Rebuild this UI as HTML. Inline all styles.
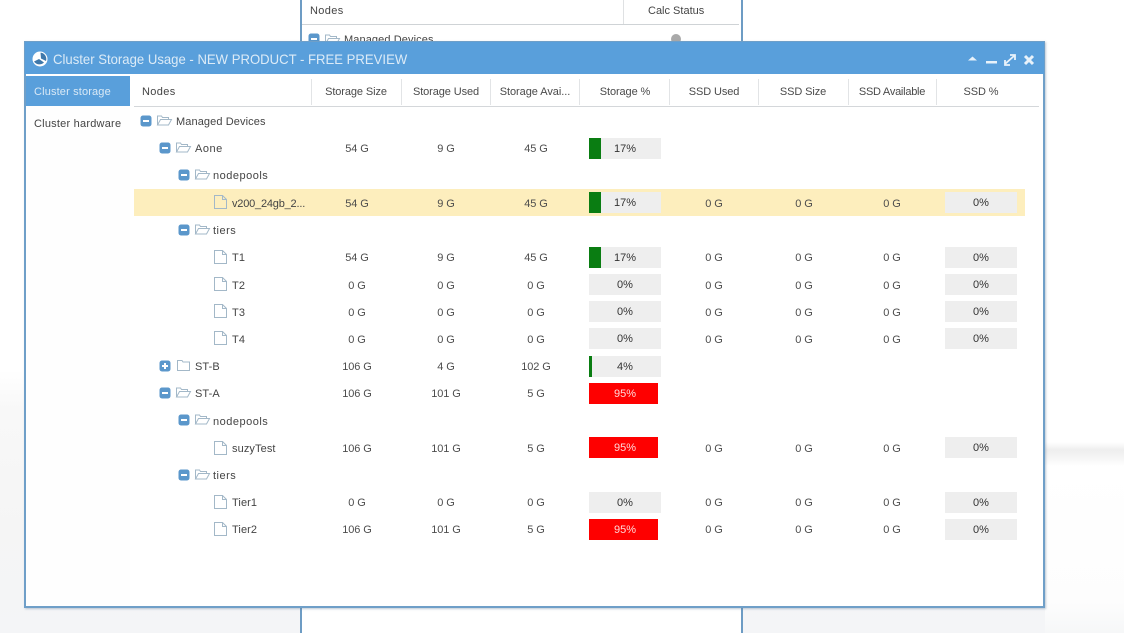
<!DOCTYPE html>
<html><head><meta charset="utf-8"><style>
html,body{margin:0;padding:0;width:1124px;height:633px;overflow:hidden;background:#fff;font-family:"Liberation Sans",sans-serif;color:#444;font-size:11px}
#w{position:relative;width:1124px;height:633px;overflow:hidden}
div,span,svg{position:absolute;display:block}
svg,symbol{overflow:visible}
.bg1{left:0;top:370px;width:1124px;height:263px;background:linear-gradient(180deg,#fff 0,#f8f8f8 15%,#f5f5f5 60%,#f4f5f7 100%)}
.bg2{left:1045px;top:362px;width:79px;height:271px;background:linear-gradient(180deg,#fff 0,#fff 80px,#eeeeee 88px,#f3f3f3 94px,#fff 104px,#fdfdfd 240px,#f6f7f8 271px)}
.back{left:300px;top:-2px;width:439px;height:635px;background:#fff;border-left:2px solid #6d9cc4;border-right:2px solid #6d9cc4}
.win{left:24px;top:41px;width:1017px;height:563px;background:#fff;border:2px solid #6f9fc8;box-shadow:1px 1px 2px rgba(90,120,150,.4)}
.tb{left:25px;top:42px;width:1019px;height:32px;background:#599fdb}
.t{white-space:nowrap;line-height:16px;letter-spacing:.1px;margin-top:1px}
.n{letter-spacing:.5px}
.hd{top:84px;margin-top:0;text-align:center;white-space:nowrap;line-height:16px;letter-spacing:-.1px;color:#4a4a4a}
.sep{top:79px;width:1px;height:26px;background:#e2e4e6}
.c{width:90px;text-align:center;white-space:nowrap;line-height:16px;letter-spacing:-.1px;color:#4d4d4d;margin-top:1px}
.bar{width:72px;height:21px;background:#eee}
.g{left:0;top:0;height:21px;background:#0a7d12}
.r{left:0;top:0;width:69px;height:21px;background:#fe0000}
.p{left:0;top:3px;width:72px;text-align:center;line-height:16px;font-size:11px;color:#333}
.w{color:#ffd8d8}
</style></head><body>
<div id="w">
<svg width="0" height="0" style="left:0;top:0"><defs>
<symbol id="m" viewBox="0 0 10 10"><rect x="-.5" y="-.5" width="11" height="11" rx="2.5" fill="#5b97cb"/><rect x="2" y="4" width="6" height="2" fill="#fff"/></symbol>
<symbol id="a" viewBox="0 0 10 10"><rect x="-.5" y="-.5" width="11" height="11" rx="2.5" fill="#5b97cb"/><path d="M2 4h2V2h2v2h2v2H6v2H4V6H2z" fill="#fff"/></symbol>
<symbol id="o" viewBox="0 0 15 11"><path d="M.5 10V1h4l1 1.500h6V4.500M.5 10l3-5.500H14.500L11.500 10z" fill="none" stroke="#a3b8c8" stroke-width="1"/></symbol>
<symbol id="d" viewBox="0 0 13 11"><path d="M.5 10.500V.5h4.500l1 1.500h6.500v8.500z" fill="none" stroke="#a3b8c8" stroke-width="1"/></symbol>
<symbol id="f" viewBox="0 0 13 14"><path d="M.5.500h8l4 4v9H.500zM8.500.5v4h4" fill="none" stroke="#a3b8c8" stroke-width="1"/></symbol>
</defs></svg>

<div class="bg1"></div><div class="bg2"></div>
<div class="back"></div>
<div class="t" style="left:310px;top:2px;letter-spacing:.35px">Nodes</div>
<div class="t" style="left:648px;top:2px;letter-spacing:0">Calc Status</div>
<div style="left:623px;top:0;width:1px;height:24px;background:#dfe1e3"></div>
<div style="left:302px;top:24px;width:437px;height:1px;background:#cfd3d6"></div>
<svg style="left:309px;top:34px" width="10" height="10"><use href="#m"/></svg>
<svg style="left:325px;top:34px" width="15" height="11"><use href="#o"/></svg>
<div class="t" style="left:344px;top:31px">Managed Devices</div>
<div style="left:671px;top:34px;width:10px;height:10px;border-radius:5px;background:#a9a9a9"></div>

<div class="win"></div>
<div class="tb"></div>
<svg style="left:32px;top:51px" width="16" height="16" viewBox="0 0 16 16"><circle cx="8" cy="8" r="7.500" fill="#fff"/><path d="M8 1.500A6.500 6.500 0 0 1 14 10L9 7.500 8.500 1.500zM2 10.500l5-2.500 5 3.500a6.500 6.500 0 0 1-10-1z" fill="#3f78aa"/></svg>
<div style="left:53px;top:50px;font-size:14px;line-height:18px;color:#dcebf7;white-space:nowrap;transform:scaleX(.9375);transform-origin:0 0">Cluster Storage Usage - NEW PRODUCT - FREE PREVIEW</div>
<svg style="left:966px;top:52px" width="70" height="16" viewBox="0 0 70 16"><path d="M2 8.500l4.500-4 4.500 4z" fill="#e8f2fa"/><rect x="20" y="9" width="11" height="2.500" fill="#e8f2fa"/><path d="M39 12L48 4M44 3h5v5M39 8v5h5" stroke="#e8f2fa" stroke-width="1.800" fill="none"/><path d="M59 4l8 8M67 4l-8 8" stroke="#e8f2fa" stroke-width="3"/></svg>

<div style="left:26px;top:76px;width:104px;height:30px;background:#599fdb"></div>
<div class="t" style="left:34px;top:83px;color:#d9e9f6;letter-spacing:.15px">Cluster storage</div>
<div style="left:26px;top:106px;width:104px;height:499px;background:#fefefe"></div>
<div class="t" style="left:34px;top:115px;letter-spacing:.22px">Cluster hardware</div>

<div class="t" style="left:142px;top:83px;letter-spacing:.35px">Nodes</div>
<div class="hd" style="left:311px;width:90px">Storage Size</div>
<div class="hd" style="left:401px;width:90px">Storage Used</div>
<div class="hd" style="left:490px;width:90px;letter-spacing:-.05px">Storage Avai...</div>
<div class="hd" style="left:580px;width:90px">Storage %</div>
<div class="hd" style="left:669px;width:90px">SSD Used</div>
<div class="hd" style="left:758px;width:90px">SSD Size</div>
<div class="hd" style="left:847px;width:90px;letter-spacing:-.25px">SSD Available</div>
<div class="hd" style="left:936px;width:90px">SSD %</div>
<div class="sep" style="left:311px"></div><div class="sep" style="left:401px"></div><div class="sep" style="left:490px"></div><div class="sep" style="left:579px"></div><div class="sep" style="left:669px"></div><div class="sep" style="left:758px"></div><div class="sep" style="left:848px"></div><div class="sep" style="left:936px"></div>
<div style="left:134px;top:106px;width:905px;height:1px;background:#d4d7da"></div>

<div style="left:134px;top:189px;width:891px;height:27px;background:#fdeebd"></div>

<svg style="left:141px;top:116px" width="10" height="10"><use href="#m"/></svg><svg style="left:157px;top:115px" width="15" height="11"><use href="#o"/></svg><div class="t" style="left:176px;top:113px">Managed Devices</div>

<svg style="left:160px;top:143px" width="10" height="10"><use href="#m"/></svg><svg style="left:176px;top:142px" width="15" height="11"><use href="#o"/></svg><div class="t n" style="left:195px;top:140px">Aone</div>
<div class="c" style="left:312px;top:140px">54 G</div><div class="c" style="left:401px;top:140px">9 G</div><div class="c" style="left:491px;top:140px">45 G</div>
<div class="bar" style="left:589px;top:138px"><div class="g" style="width:12px"></div><div class="p">17%</div></div>

<svg style="left:179px;top:170px" width="10" height="10"><use href="#m"/></svg><svg style="left:195px;top:169px" width="15" height="11"><use href="#o"/></svg><div class="t n" style="left:213px;top:167px">nodepools</div>

<svg style="left:214px;top:195px" width="13" height="14"><use href="#f"/></svg><div class="t" style="left:232px;top:195px;letter-spacing:-.2px">v200_24gb_2...</div>
<div class="c" style="left:312px;top:195px">54 G</div><div class="c" style="left:401px;top:195px">9 G</div><div class="c" style="left:491px;top:195px">45 G</div>
<div class="bar" style="left:589px;top:192px"><div class="g" style="width:12px"></div><div class="p">17%</div></div>
<div class="c" style="left:669px;top:195px">0 G</div><div class="c" style="left:759px;top:195px">0 G</div><div class="c" style="left:847px;top:195px">0 G</div>
<div class="bar" style="left:945px;top:192px"><div class="p">0%</div></div>

<svg style="left:179px;top:225px" width="10" height="10"><use href="#m"/></svg><svg style="left:195px;top:224px" width="15" height="11"><use href="#o"/></svg><div class="t n" style="left:213px;top:222px">tiers</div>

<svg style="left:214px;top:250px" width="13" height="14"><use href="#f"/></svg><div class="t" style="left:232px;top:249px">T1</div>
<div class="c" style="left:312px;top:249px">54 G</div><div class="c" style="left:401px;top:249px">9 G</div><div class="c" style="left:491px;top:249px">45 G</div>
<div class="bar" style="left:589px;top:247px"><div class="g" style="width:12px"></div><div class="p">17%</div></div>
<div class="c" style="left:669px;top:249px">0 G</div><div class="c" style="left:759px;top:249px">0 G</div><div class="c" style="left:847px;top:249px">0 G</div>
<div class="bar" style="left:945px;top:247px"><div class="p">0%</div></div>

<svg style="left:214px;top:277px" width="13" height="14"><use href="#f"/></svg><div class="t" style="left:232px;top:277px">T2</div>
<div class="c" style="left:312px;top:277px">0 G</div><div class="c" style="left:401px;top:277px">0 G</div><div class="c" style="left:491px;top:277px">0 G</div>
<div class="bar" style="left:589px;top:274px"><div class="p">0%</div></div>
<div class="c" style="left:669px;top:277px">0 G</div><div class="c" style="left:759px;top:277px">0 G</div><div class="c" style="left:847px;top:277px">0 G</div>
<div class="bar" style="left:945px;top:274px"><div class="p">0%</div></div>

<svg style="left:214px;top:304px" width="13" height="14"><use href="#f"/></svg><div class="t" style="left:232px;top:304px">T3</div>
<div class="c" style="left:312px;top:304px">0 G</div><div class="c" style="left:401px;top:304px">0 G</div><div class="c" style="left:491px;top:304px">0 G</div>
<div class="bar" style="left:589px;top:301px"><div class="p">0%</div></div>
<div class="c" style="left:669px;top:304px">0 G</div><div class="c" style="left:759px;top:304px">0 G</div><div class="c" style="left:847px;top:304px">0 G</div>
<div class="bar" style="left:945px;top:301px"><div class="p">0%</div></div>

<svg style="left:214px;top:331px" width="13" height="14"><use href="#f"/></svg><div class="t" style="left:232px;top:331px">T4</div>
<div class="c" style="left:312px;top:331px">0 G</div><div class="c" style="left:401px;top:331px">0 G</div><div class="c" style="left:491px;top:331px">0 G</div>
<div class="bar" style="left:589px;top:328px"><div class="p">0%</div></div>
<div class="c" style="left:669px;top:331px">0 G</div><div class="c" style="left:759px;top:331px">0 G</div><div class="c" style="left:847px;top:331px">0 G</div>
<div class="bar" style="left:945px;top:328px"><div class="p">0%</div></div>

<svg style="left:160px;top:361px" width="10" height="10"><use href="#a"/></svg><svg style="left:177px;top:360px" width="13" height="11"><use href="#d"/></svg><div class="t" style="left:195px;top:358px">ST-B</div>
<div class="c" style="left:312px;top:358px">106 G</div><div class="c" style="left:401px;top:358px">4 G</div><div class="c" style="left:491px;top:358px">102 G</div>
<div class="bar" style="left:589px;top:356px"><div class="g" style="width:2.500px"></div><div class="p">4%</div></div>

<svg style="left:160px;top:388px" width="10" height="10"><use href="#m"/></svg><svg style="left:176px;top:387px" width="15" height="11"><use href="#o"/></svg><div class="t" style="left:195px;top:385px">ST-A</div>
<div class="c" style="left:312px;top:385px">106 G</div><div class="c" style="left:401px;top:385px">101 G</div><div class="c" style="left:491px;top:385px">5 G</div>
<div class="bar" style="left:589px;top:383px;background:#fff"><div class="r"></div><div class="p w">95%</div></div>

<svg style="left:179px;top:415px" width="10" height="10"><use href="#m"/></svg><svg style="left:195px;top:414px" width="15" height="11"><use href="#o"/></svg><div class="t n" style="left:213px;top:413px">nodepools</div>

<svg style="left:214px;top:441px" width="13" height="14"><use href="#f"/></svg><div class="t" style="left:232px;top:440px">suzyTest</div>
<div class="c" style="left:312px;top:440px">106 G</div><div class="c" style="left:401px;top:440px">101 G</div><div class="c" style="left:491px;top:440px">5 G</div>
<div class="bar" style="left:589px;top:437px;background:#fff"><div class="r"></div><div class="p w">95%</div></div>
<div class="c" style="left:669px;top:440px">0 G</div><div class="c" style="left:759px;top:440px">0 G</div><div class="c" style="left:847px;top:440px">0 G</div>
<div class="bar" style="left:945px;top:437px"><div class="p">0%</div></div>

<svg style="left:179px;top:470px" width="10" height="10"><use href="#m"/></svg><svg style="left:195px;top:469px" width="15" height="11"><use href="#o"/></svg><div class="t n" style="left:213px;top:467px">tiers</div>

<svg style="left:214px;top:495px" width="13" height="14"><use href="#f"/></svg><div class="t" style="left:232px;top:494px">Tier1</div>
<div class="c" style="left:312px;top:494px">0 G</div><div class="c" style="left:401px;top:494px">0 G</div><div class="c" style="left:491px;top:494px">0 G</div>
<div class="bar" style="left:589px;top:492px"><div class="p">0%</div></div>
<div class="c" style="left:669px;top:494px">0 G</div><div class="c" style="left:759px;top:494px">0 G</div><div class="c" style="left:847px;top:494px">0 G</div>
<div class="bar" style="left:945px;top:492px"><div class="p">0%</div></div>

<svg style="left:214px;top:522px" width="13" height="14"><use href="#f"/></svg><div class="t" style="left:232px;top:521px">Tier2</div>
<div class="c" style="left:312px;top:521px">106 G</div><div class="c" style="left:401px;top:521px">101 G</div><div class="c" style="left:491px;top:521px">5 G</div>
<div class="bar" style="left:589px;top:519px;background:#fff"><div class="r"></div><div class="p w">95%</div></div>
<div class="c" style="left:669px;top:521px">0 G</div><div class="c" style="left:759px;top:521px">0 G</div><div class="c" style="left:847px;top:521px">0 G</div>
<div class="bar" style="left:945px;top:519px"><div class="p">0%</div></div>
</div>
</body></html>
